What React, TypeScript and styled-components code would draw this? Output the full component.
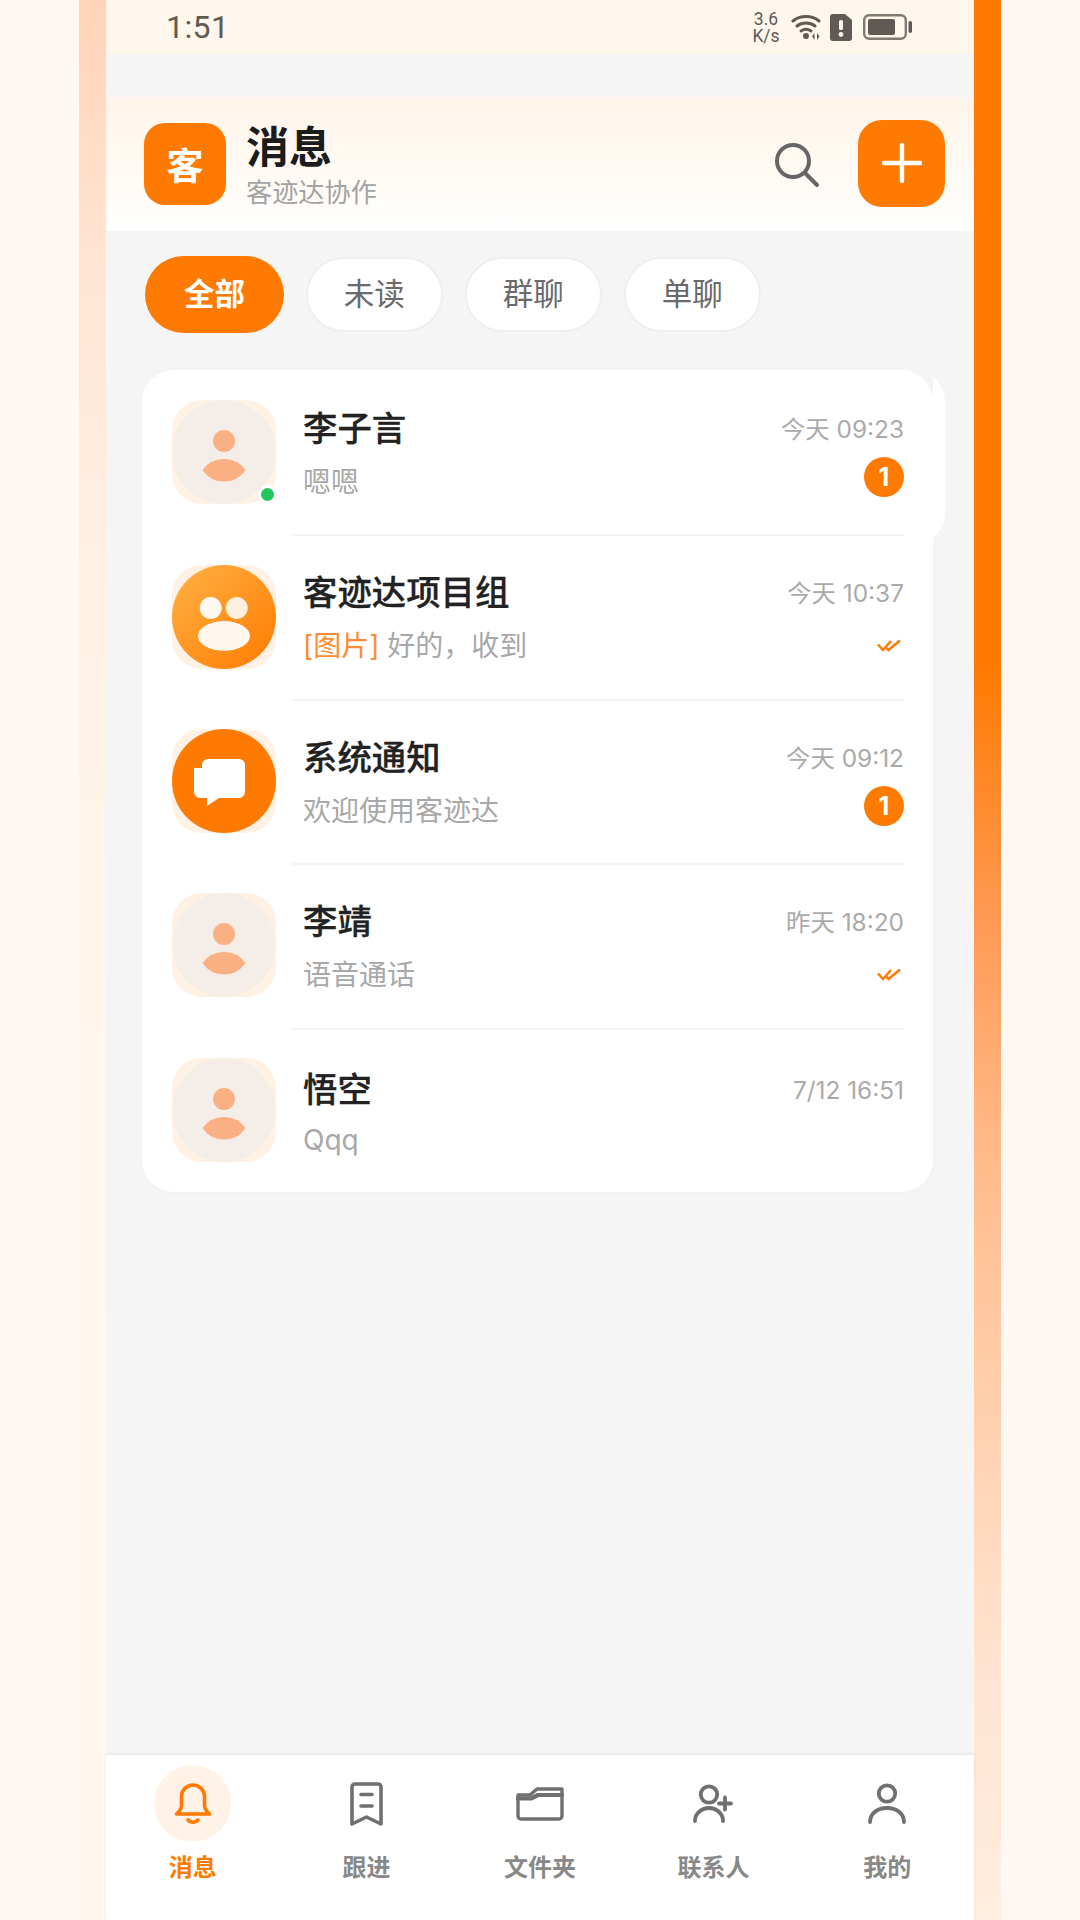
import React from "react";
import styled, { createGlobalStyle } from "styled-components";

const Global = createGlobalStyle`
  html, body { margin: 0; padding: 0; background: #fff7f1; }
  * { box-sizing: border-box; }
  body { font-family: Inter, "Noto Sans CJK SC", sans-serif; }
`;

const Page = styled.div`
  width: 1080px; height: 1920px; overflow: hidden; background: #fff7f1;
  display: flex; justify-content: center;
`;
const LeftStrip = styled.div`
  width: 27px; flex: none;
  background: linear-gradient(192deg, #ffd3b8 0, #ffe4d2 250px, #fff0e3 550px, #fff5ea 850px, #fff7f0 1300px);
`;
const RightStrip = styled.div`
  width: 27px; flex: none;
  background: linear-gradient(186deg, #ff7a00 0, #ff7a00 660px, #ff9a55 918px, #ffbc8d 1163px, #ffd0ae 1408px, #ffe3d0 1653px, #ffeee0 1920px);
`;
const Screen = styled.div`
  width: 868px; flex: none; height: 1920px; background: #f5f5f5;
  display: flex; flex-direction: column;
`;
const StatusBar = styled.div`
  height: 54px; flex: none; background: #fff6ec; display: flex; align-items: center;
  justify-content: space-between; padding: 0 62px 0 60px; color: #5f5b54;
`;
const Clock = styled.span`
  font-family: Roboto, sans-serif; font-size: 32px; letter-spacing: 0.4px; line-height: 54px;
`;
const StatusIcons = styled.div`display: flex; align-items: center;`;
const Speed = styled.div`
  font-family: Roboto, sans-serif; font-size: 17.5px; line-height: 17px; text-align: center;
  margin-right: 11px; width: 28px; padding-top: 2px;
`;
const Header = styled.header`
  margin-top: 43px; height: 134px; flex: none; display: flex; align-items: center;
  padding: 0 29px 0 39px;
  background: linear-gradient(to bottom, #fff5ea 0%, #fffaf4 55%, #ffffff 100%);
`;
const Logo = styled.div`
  width: 82px; height: 82px; margin: -1px 0 0 -1px; border-radius: 21px; background: #ff7a00; color: #fff;
  font-size: 37px; font-weight: 700; display: flex; align-items: center; justify-content: center;
`;
const TitleCol = styled.div`margin-left: 20px; flex: 1; display: flex; flex-direction: column; padding-top: 4px;`;
const Title = styled.div`font-size: 43px; font-weight: 700; color: #1c1c1c; line-height: 50px;`;
const Subtitle = styled.div`font-size: 26.2px; color: #a3a3a3; line-height: 34px; margin-top: 4px;`;
const SearchBtn = styled.div`
  width: 48px; height: 48px; margin-right: 37px; margin-top: 4px; display: flex;
`;
const AddBtn = styled.div`
  width: 87px; height: 87px; margin-top: -2px; border-radius: 24px; background: #ff7a00;
  display: flex; align-items: center; justify-content: center;
`;
const Chips = styled.div`
  display: flex; align-items: center; gap: 21.5px; padding: 24px 0 0 39px; height: 102px; flex: none;
`;
const Chip = styled.div<{ $active?: boolean }>`
  height: ${(p) => (p.$active ? 77 : 75)}px;
  width: ${(p) => (p.$active ? 139 : 137.5)}px;
  border-radius: 40px; display: flex; align-items: center; justify-content: center;
  font-size: 30.5px; line-height: 1;
  font-weight: ${(p) => (p.$active ? 700 : 400)};
  color: ${(p) => (p.$active ? "#fff" : "#6a6a6a")};
  background: ${(p) => (p.$active ? "#ff7a00" : "#fff")};
  border: ${(p) => (p.$active ? "none" : "2px solid #efefef")};
`;
const ListWrap = styled.div`
  position: relative; margin: 37px 0 0 36px; width: 791px; flex: none;
`;
const SwipeBack = styled.div`
  position: absolute; top: 0; right: -12px; width: 120px; height: 175px;
  border-radius: 32px; background: #fff; clip-path: inset(0 0 0 108px);
`;
const Card = styled.div`
  position: relative; background: #fff; border-radius: 32px; overflow: hidden;
  box-shadow: 0 2px 6px rgba(0,0,0,0.015);
`;
const Row = styled.div`
  height: 164.4px; display: flex; align-items: center; padding: 0 29px 0 30px;
`;
const AvatarBox = styled.div`
  position: relative; width: 104px; height: 104px; flex: none; border-radius: 30px; background: #fff1e4;
`;
const AvatarCircle = styled.div<{ $kind: "person" | "group" | "system" }>`
  width: 104px; height: 104px; border-radius: 50%; display: flex;
  background: ${(p) =>
    p.$kind === "person"
      ? "#f5eee8"
      : p.$kind === "group"
      ? "linear-gradient(135deg, #ffb245 0%, #ff7a00 100%)"
      : "#ff7a00"};
`;
const OnlineDot = styled.span`
  position: absolute; right: -1px; bottom: 0; width: 19px; height: 19px; border-radius: 50%;
  background: #22c55e; border: 3px solid #fff; box-sizing: border-box;
`;
const Body = styled.div<{ $last?: boolean }>`
  flex: 1; align-self: stretch; margin: 0 0 -2px 17px; padding: ${(p) => (p.$last ? 38 : 35)}px 0 0 10px;
  display: flex; justify-content: space-between; min-width: 0;
  border-bottom: ${(p) => (p.$last ? "none" : "2px solid #f2f2f2")};
`;
const TextCol = styled.div`display: flex; flex-direction: column;`;
const Name = styled.div`
  font-size: 34.4px; font-weight: 500; color: #222; line-height: 48px; -webkit-text-stroke: 0.3px #222;
`;
const Msg = styled.div<{ $last?: boolean }>`
  font-size: 28px; color: #a8a8a8; line-height: 40px; margin-top: ${(p) => (p.$last ? 6 : 9)}px;
`;
const ImgTag = styled.span`color: #ff8a33;`;
const MetaCol = styled.div`display: flex; flex-direction: column; align-items: flex-end;`;
const Time = styled.div`
  font-size: 24.4px; color: #aaa; line-height: 48px;
`;
const MetaSlot = styled.div`
  height: 40px; margin-top: 8px; display: flex; align-items: center; justify-content: flex-end;
`;
const Badge = styled.span`
  width: 40px; height: 40px; margin-top: -8px; border-radius: 50%; background: #ff7a00; color: #fff;
  font-size: 25px; font-weight: 700;
  display: flex; align-items: center; justify-content: center;
`;
const Spacer = styled.div`flex: 1;`;
const Nav = styled.nav`
  height: 165px; flex: none; background: #fff; display: grid; grid-template-columns: repeat(5, 1fr);
  box-shadow: 0 -1px 3px rgba(0,0,0,0.07); position: relative;
`;
const NavItem = styled.div`display: flex; flex-direction: column; align-items: center; padding-top: 10px;`;
const IconSlot = styled.div<{ $active?: boolean }>`
  width: 77px; height: 77px; border-radius: 50%; display: flex; align-items: center; justify-content: center;
  background: ${(p) => (p.$active ? "#fff3e8" : "transparent")};
`;
const NavLabel = styled.div<{ $active?: boolean }>`
  font-size: 24px; font-weight: 700; line-height: 32px; margin-top: 10px;
  color: ${(p) => (p.$active ? "#ff7a00" : "#888")};
`;

const PersonIcon = () => (
  <svg width="104" height="104" viewBox="0 0 104 104">
    <circle cx="52" cy="41" r="11" fill="#fbb084" />
    <path d="M30.5 70 Q38 59 52 59 Q66 59 73.5 70 Q66 81.5 52 81.5 Q38 81.5 30.5 70Z" fill="#fbb084" />
  </svg>
);
const GroupIcon = () => (
  <svg width="104" height="104" viewBox="0 0 104 104">
    <circle cx="38.7" cy="43" r="11" fill="#fff" fillOpacity="0.93" />
    <circle cx="64.7" cy="43" r="11" fill="#fff" fillOpacity="0.85" />
    <ellipse cx="52" cy="71" rx="26" ry="15" fill="#fff" fillOpacity="0.92" />
  </svg>
);
const SystemIcon = () => (
  <svg width="104" height="104" viewBox="0 0 104 104">
    <path
      d="M36 30 H67 a6 6 0 0 1 6 6 V63 a6 6 0 0 1 -6 6 H47 L35 77 V69 H28 a6 6 0 0 1 -6 -6 V39 H30 V36 a6 6 0 0 1 6 -6Z"
      fill="#fff"
    />
  </svg>
);
const DoubleCheck = () => (
  <svg width="24" height="14" viewBox="0 0 24 14" fill="none" stroke="#ff7a00" strokeWidth="2.5" style={{ margin: "2px 3px 0 0" }}>
    <path d="M1 5.5 L6 11 L14 2" />
    <path d="M9.5 9 L11.5 11 L23 1.5" />
  </svg>
);

const BellIcon = () => (
  <svg width="38" height="42" viewBox="0 0 38 42" fill="none" stroke="#ff7a00" strokeWidth="3.6" strokeLinecap="round" strokeLinejoin="round">
    <path d="M2.5 31 C6 28 7.5 26 7.5 22 V13.5 a11.5 11.5 0 0 1 23 0 V22 C30.5 26 32 28 35.5 31 Z" />
    <path d="M14 37 a6.5 6.5 0 0 0 10 0" />
  </svg>
);
const BookmarkIcon = () => (
  <svg width="33" height="44" viewBox="0 0 33 44" fill="none" stroke="#707070" strokeWidth="3.6" strokeLinejoin="round" strokeLinecap="round">
    <path d="M2 5 a3 3 0 0 1 3-3 h23 a3 3 0 0 1 3 3 v37 l-14.5-7 L2 42Z" />
    <path d="M11 12.5 h11 M11 24 h11" />
  </svg>
);
const FolderIcon = () => (
  <svg width="48" height="34" viewBox="0 0 48 34" fill="none" stroke="#707070" strokeWidth="3.4" strokeLinejoin="round" strokeLinecap="round">
    <path d="M2 13 V29 a3 3 0 0 0 3 3 H43 a3 3 0 0 0 3-3 V2 H21 L14 8 H2Z" />
    <path d="M2 11.5 H15 L22 8 H46" strokeWidth="4.2" />
  </svg>
);
const UserPlusIcon = () => (
  <svg width="42" height="40" viewBox="0 0 42 40" fill="none" stroke="#707070" strokeWidth="3.8" strokeLinecap="round">
    <circle cx="16" cy="10.5" r="8.2" />
    <path d="M2 37 C2 29 9 24 16 24 C23 24 30 29 30 37" />
    <path d="M26 19.5 H38 M32 13.5 V25.5" />
  </svg>
);
const UserIcon = () => (
  <svg width="38" height="42" viewBox="0 0 38 42" fill="none" stroke="#707070" strokeWidth="3.8" strokeLinecap="round">
    <circle cx="19" cy="10.5" r="8.2" />
    <path d="M2 39 C2 30 10 25 19 25 C28 25 36 30 36 39" />
  </svg>
);
const SearchIcon = () => (
  <svg width="48" height="48" viewBox="0 0 48 48" fill="none" stroke="#666" strokeWidth="4" strokeLinecap="round">
    <circle cx="20" cy="19" r="16" />
    <path d="M32 31 L44 43" />
  </svg>
);
const PlusIcon = () => (
  <svg width="40" height="40" viewBox="0 0 40 40" stroke="#fff" strokeWidth="4.4" strokeLinecap="round">
    <path d="M2 20 H38 M20 2 V38" />
  </svg>
);
const WifiIcon = () => (
  <svg width="32" height="26" viewBox="0 0 32 26" fill="none" stroke="#5f5b54" strokeWidth="3" strokeLinecap="round" style={{ marginRight: 7 }}>
    <path d="M2 7 C9 1 21 1 28 7" />
    <path d="M6 12 C11 8 19 8 24 12" />
    <path d="M10 17 C13 15 17 15 20 17" />
    <circle cx="15" cy="22" r="3" fill="#5f5b54" stroke="none" />
    <path d="M23.5 19 l-2.5 3.5 l2.5 3.5z M26 19 l2.5 3.5 l-2.5 3.5z" fill="#5f5b54" stroke="none" />
  </svg>
);
const SimAlertIcon = () => (
  <svg width="22" height="27" viewBox="0 0 22 27" style={{ marginRight: 11 }}>
    <path d="M3 0 H15 L22 6 V24 a3 3 0 0 1 -3 3 H3 a3 3 0 0 1 -3 -3 V3 a3 3 0 0 1 3 -3Z" fill="#5f5b54" />
    <rect x="9" y="6" width="4" height="10" rx="1.5" fill="#fff6ec" />
    <circle cx="11" cy="20.5" r="2.4" fill="#fff6ec" />
  </svg>
);
const BatteryIcon = () => (
  <svg width="49" height="26" viewBox="0 0 49 26" fill="none">
    <rect x="1.2" y="1.2" width="41.6" height="23.6" rx="5" stroke="#7f7b73" strokeWidth="2.4" />
    <rect x="5" y="5" width="27" height="16" rx="2" fill="#5f5b54" />
    <rect x="45.5" y="7" width="3.5" height="12" rx="1.7" fill="#5f5b54" />
  </svg>
);

type Item = {
  name: string;
  msg: React.ReactNode;
  time: string;
  kind: "person" | "group" | "system";
  online?: boolean;
  meta?: "badge" | "check";
};

const items: Item[] = [
  { name: "李子言", msg: "嗯嗯", time: "今天 09:23", kind: "person", online: true, meta: "badge" },
  { name: "客迹达项目组", msg: <><ImgTag>[图片]</ImgTag> 好的，收到</>, time: "今天 10:37", kind: "group", meta: "check" },
  { name: "系统通知", msg: "欢迎使用客迹达", time: "今天 09:12", kind: "system", meta: "badge" },
  { name: "李靖", msg: "语音通话", time: "昨天 18:20", kind: "person", meta: "check" },
  { name: "悟空", msg: "Qqq", time: "7/12 16:51", kind: "person" },
];

const tabs = [
  { label: "消息", icon: <BellIcon />, active: true },
  { label: "跟进", icon: <BookmarkIcon /> },
  { label: "文件夹", icon: <FolderIcon /> },
  { label: "联系人", icon: <UserPlusIcon /> },
  { label: "我的", icon: <UserIcon /> },
];

export default function App() {
  return (
    <Page>
      <Global />
      <LeftStrip />
      <Screen>
        <StatusBar>
          <Clock>1:51</Clock>
          <StatusIcons>
            <Speed>3.6<br />K/s</Speed>
            <WifiIcon />
            <SimAlertIcon />
            <BatteryIcon />
          </StatusIcons>
        </StatusBar>
        <Header>
          <Logo>客</Logo>
          <TitleCol>
            <Title>消息</Title>
            <Subtitle>客迹达协作</Subtitle>
          </TitleCol>
          <SearchBtn><SearchIcon /></SearchBtn>
          <AddBtn><PlusIcon /></AddBtn>
        </Header>
        <Chips>
          <Chip $active>全部</Chip>
          <Chip>未读</Chip>
          <Chip>群聊</Chip>
          <Chip>单聊</Chip>
        </Chips>
        <ListWrap>
          <SwipeBack />
          <Card>
            {items.map((it, i) => {
              const last = i === items.length - 1;
              return (
                <Row key={it.name}>
                  <AvatarBox>
                    <AvatarCircle $kind={it.kind}>
                      {it.kind === "person" && <PersonIcon />}
                      {it.kind === "group" && <GroupIcon />}
                      {it.kind === "system" && <SystemIcon />}
                    </AvatarCircle>
                    {it.online && <OnlineDot />}
                  </AvatarBox>
                  <Body $last={last}>
                    <TextCol>
                      <Name>{it.name}</Name>
                      <Msg $last={last}>{it.msg}</Msg>
                    </TextCol>
                    <MetaCol>
                      <Time>{it.time}</Time>
                      <MetaSlot>
                        {it.meta === "badge" && <Badge>1</Badge>}
                        {it.meta === "check" && <DoubleCheck />}
                      </MetaSlot>
                    </MetaCol>
                  </Body>
                </Row>
              );
            })}
          </Card>
        </ListWrap>
        <Spacer />
        <Nav>
          {tabs.map((t) => (
            <NavItem key={t.label}>
              <IconSlot $active={t.active}>{t.icon}</IconSlot>
              <NavLabel $active={t.active}>{t.label}</NavLabel>
            </NavItem>
          ))}
        </Nav>
      </Screen>
      <RightStrip />
    </Page>
  );
}
